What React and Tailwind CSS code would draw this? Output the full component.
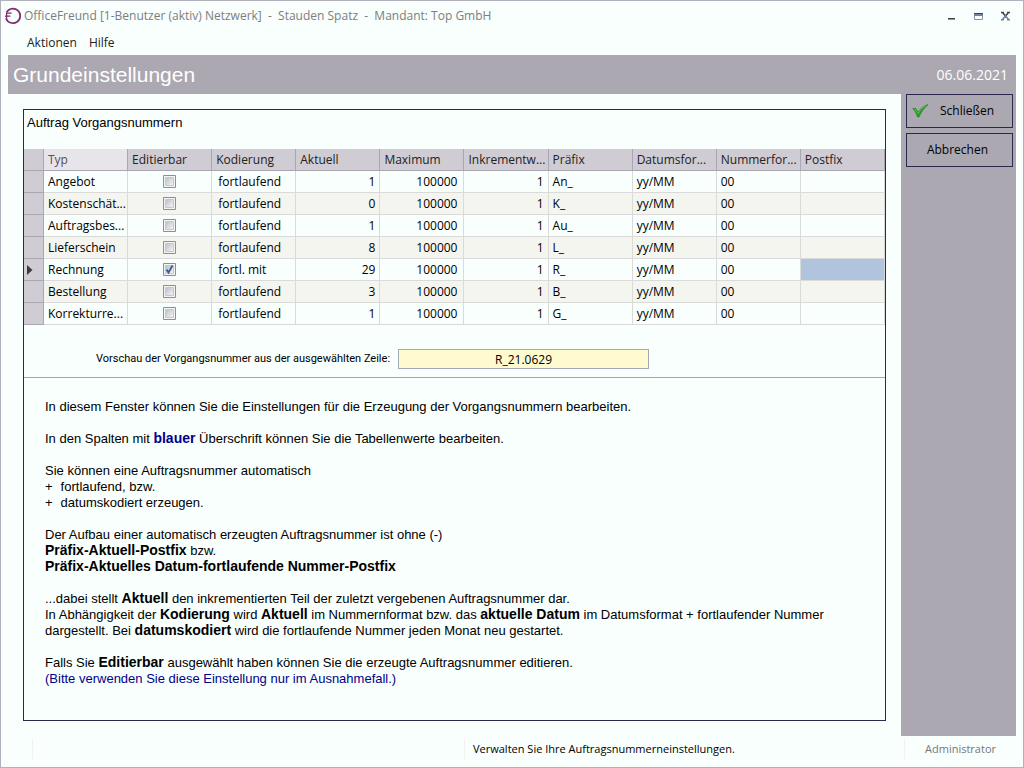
import React, { useState } from 'react';

const initialRows = [
  { typ: 'Angebot', editierbar: false, kodierung: 'fortlaufend', aktuell: 1, prefix: 'An_' },
  { typ: 'Kostenschät...', editierbar: false, kodierung: 'fortlaufend', aktuell: 0, prefix: 'K_' },
  { typ: 'Auftragsbes...', editierbar: false, kodierung: 'fortlaufend', aktuell: 1, prefix: 'Au_' },
  { typ: 'Lieferschein', editierbar: false, kodierung: 'fortlaufend', aktuell: 8, prefix: 'L_' },
  { typ: 'Rechnung', editierbar: true, kodierung: 'fortl. mit', aktuell: 29, prefix: 'R_' },
  { typ: 'Bestellung', editierbar: false, kodierung: 'fortlaufend', aktuell: 3, prefix: 'B_' },
  { typ: 'Korrekturre...', editierbar: false, kodierung: 'fortlaufend', aktuell: 1, prefix: 'G_' },
];

const columns = [
  'Typ', 'Editierbar', 'Kodierung', 'Aktuell', 'Maximum',
  'Inkrementw...', 'Präfix', 'Datumsfor...', 'Nummerfor...', 'Postfix',
];

const SELECTED = 4;

function TitleBar() {
  return (
    <div className="flex h-[30px] items-center pl-[3px] pr-3 text-[#7d7d7d]">
      <svg width="18" height="18" viewBox="0 0 18 18" fill="none" stroke="#82286f" className="mr-0.5">
        <path d="M2.4 5.6A7.3 7.3 0 1 1 2 11.2" strokeWidth="1.7" />
        <path d="M3 6.2H7.6M1 9.2H6.4M2.6 6V11.6" strokeWidth="1.3" />
      </svg>
      <span className="flex-1 whitespace-pre">OfficeFreund [1-Benutzer (aktiv) Netzwerk]  -  Stauden Spatz  -  Mandant: Top GmbH</span>
      <div className="flex gap-4">
        <button type="button" aria-label="Minimieren">
          <svg width="11" height="11" viewBox="0 0 11 11">
            <path d="M2 7h7v1H2z" fill="#3f4450" />
            <path d="M2 8h7v1H2z" fill="#8492ad" />
          </svg>
        </button>
        <button type="button" aria-label="Maximieren">
          <svg width="11" height="11" viewBox="0 0 11 11">
            <path d="M1.5 2.5h8v6h-8z" fill="none" stroke="#8492ad" />
            <path d="M1 2h9v1H1z" fill="#3f4450" />
            <path d="M1 3h9v2H1z" fill="#7482a0" />
          </svg>
        </button>
        <button type="button" aria-label="Fenster schließen">
          <svg width="11" height="11" viewBox="0 0 11 11" fill="none">
            <path d="M2.5 1.5L5.5 5L8.5 1.5M1 1.5h3M7 1.5h3" stroke="#3f4450" strokeWidth="1.6" />
            <path d="M2.5 8.5L5.5 5L8.5 8.5M1 8.8h3M7 8.8h3" stroke="#7182a2" strokeWidth="1.6" />
          </svg>
        </button>
      </div>
    </div>
  );
}

function Tick({ checked, onClick }) {
  return (
    <svg width="13" height="13" viewBox="0 0 13 13" onClick={onClick} className="mx-auto block">
      <defs>
        <linearGradient id="box" x1="0" y1="0" x2="1" y2="1">
          <stop offset="0" stopColor="#b9bfc8" />
          <stop offset="1" stopColor="#f6f6f6" />
        </linearGradient>
      </defs>
      <path d="M.5 .5h12v12H.5z" fill="#f4f4f4" stroke="#8e8f8f" />
      <path d="M2.5 2.5h8v8h-8z" fill="url(#box)" stroke="#c4c8ce" />
      {checked && <path d="M3.5 6.5L5.5 9.5L9.5 2.5" fill="none" stroke="#3a5c99" strokeWidth="1.8" />}
    </svg>
  );
}

function NumberTable({ rows, onToggle }) {
  return (
    <table className="w-full table-fixed border-separate border-spacing-0 text-black">
      <thead>
        <tr className="h-[22px] bg-[#d0ccd3] text-left text-[#222]">
          <th className="w-5 border-b border-r border-[#aaa7b2]" aria-label="Auswahl" />
          {columns.map((col, i) => (
            <th
              key={col}
              className={`whitespace-nowrap border-b border-r border-[#aaa7b2] pl-1 font-normal ${i === 0 ? 'bg-[#e8e5ea] text-[#55505f]' : ''}`}
            >
              {col}
            </th>
          ))}
        </tr>
      </thead>
      <tbody>
        {rows.map((row, i) => (
          <tr key={row.typ} className="h-[22px] even:bg-[#f5f5f0] [&>td]:whitespace-nowrap [&>td]:border-b [&>td]:border-r [&>td]:border-[#dadada] [&>td]:pl-1">
            <th className="border-b border-r border-[#aaa7b2] bg-[#d0ccd3]">
              {i === SELECTED && (
                <svg width="6" height="10" viewBox="0 0 6 10" className="ml-[3px] block">
                  <path d="M0 0L5.5 5L0 10z" fill="#3c3c40" />
                </svg>
              )}
            </th>
            <td>{row.typ}</td>
            <td className="pr-1">
              <input
                type="checkbox"
                aria-label={`${row.typ} editierbar`}
                checked={row.editierbar}
                onChange={() => onToggle(i)}
                className="sr-only"
              />
              <Tick checked={row.editierbar} onClick={() => onToggle(i)} />
            </td>
            <td><span className="pl-0.5">{row.kodierung}</span></td>
            <td className="pr-1 text-right">{row.aktuell}</td>
            <td className="pr-1.5 text-right">100000</td>
            <td className="pr-1 text-right">1</td>
            <td>{row.prefix}</td>
            <td>yy/MM</td>
            <td>00</td>
            <td className={i === SELECTED ? 'bg-[#b0c4de]' : ''} />
          </tr>
        ))}
      </tbody>
    </table>
  );
}

function HelpText() {
  return (
    <div className="space-y-4 px-[21px] pt-[21px] font-['Liberation_Sans',Arial,sans-serif] text-[13px] leading-4 text-black [&_b]:text-sm [&_b]:leading-none">
      <p>In diesem Fenster können Sie die Einstellungen für die Erzeugung der Vorgangsnummern bearbeiten.</p>
      <p>In den Spalten mit <b className="text-[#00008b]">blauer</b> Überschrift können Sie die Tabellenwerte bearbeiten.</p>
      <div>
        <p>Sie können eine Auftragsnummer automatisch</p>
        <ul>
          <li className="flex gap-2"><span>+</span>fortlaufend, bzw.</li>
          <li className="flex gap-2"><span>+</span>datumskodiert erzeugen.</li>
        </ul>
      </div>
      <p>
        Der Aufbau einer automatisch erzeugten Auftragsnummer ist ohne (-)<br />
        <b>Präfix-Aktuell-Postfix</b> bzw.<br />
        <b>Präfix-Aktuelles Datum-fortlaufende Nummer-Postfix</b>
      </p>
      <p>
        ...dabei stellt <b>Aktuell</b> den inkrementierten Teil der zuletzt vergebenen Auftragsnummer dar.<br />
        In Abhängigkeit der <b>Kodierung</b> wird <b>Aktuell</b> im Nummernformat bzw. das <b>aktuelle Datum</b> im Datumsformat + fortlaufender Nummer<br />
        dargestellt. Bei <b>datumskodiert</b> wird die fortlaufende Nummer jeden Monat neu gestartet.
      </p>
      <p>
        Falls Sie <b>Editierbar</b> ausgewählt haben können Sie die erzeugte Auftragsnummer editieren.<br />
        <span className="text-[#00008b]">(Bitte verwenden Sie diese Einstellung nur im Ausnahmefall.)</span>
      </p>
    </div>
  );
}

export default function App() {
  const [rows, setRows] = useState(initialRows);

  const toggle = (index) => {
    setRows(rows.map((r, i) => (i === index ? { ...r, editierbar: !r.editierbar } : r)));
  };

  return (
    <div className="flex min-h-screen flex-col border border-[#b0b0ba] bg-[#f8fffd] px-[7px] font-['Open_Sans','Segoe_UI',sans-serif] text-xs">
      <div className="-mx-[7px]">
        <TitleBar />
      </div>
      <nav className="flex h-6 items-center gap-3 pl-[19px] text-[#222]">
        <button type="button">Aktionen</button>
        <button type="button">Hilfe</button>
      </nav>

      <header className="flex h-[39px] items-center justify-between bg-[#aba8b2] pl-[5px] pr-2 text-white">
        <h1 className="font-['Liberation_Sans',Arial,sans-serif] text-[21px]">Grundeinstellungen</h1>
        <span className="text-sm">06.06.2021</span>
      </header>

      <div className="flex flex-1">
        <main className="flex flex-1 flex-col px-[15px] py-[15px]">
          <section className="flex flex-1 flex-col border border-[#2b2850]">
            <h2 className="h-[39px] pl-[3px] pt-[5px] font-['Liberation_Sans',Arial,sans-serif] text-[13px] leading-4 text-black">
              Auftrag Vorgangsnummern
            </h2>
            <NumberTable rows={rows} onToggle={toggle} />
            <div className="flex items-center border-b border-[#a3a8ae] pb-2 pl-[72px] pt-6 text-black">
              <label htmlFor="preview" className="font-[Roboto,sans-serif] text-[11px]">
                Vorschau der Vorgangsnummer aus der ausgewählten Zeile:
              </label>
              <input
                id="preview"
                readOnly
                value="R_21.0629"
                className="ml-2 h-5 w-[251px] border border-[#a3a8b4] bg-[#fffbcf] text-center"
              />
            </div>
            <HelpText />
          </section>
        </main>

        <aside className="flex w-[115px] flex-col gap-[5px] bg-[#aba8b2] pl-[5px] pr-[3px] text-black">
          <button type="button" className="flex h-[34px] items-center border border-[#2b2850] pl-[5px] pr-[18px]">
            <svg width="17" height="14" viewBox="0 0 17 14">
              <path d="M.8 4.5L3.5 4.2L6.2 8C9 4.2 12 1.6 16 .6C12 4 9.5 8 7 13H5.5C4.5 10 3 7 .8 4.5z" fill="#27a022" stroke="#1f7f1f" strokeWidth=".6" />
              <path d="M2.5 5L6 9.5C8.5 5.5 11 3.2 13.5 2" fill="none" stroke="#62cc50" strokeWidth=".8" />
            </svg>
            <span className="flex-1 text-right">Schließen</span>
          </button>
          <button type="button" className="h-[34px] border border-[#2b2850] pr-1">Abbrechen</button>
        </aside>
      </div>

      <footer className="mb-1.5 flex h-[25px] items-center pl-6 text-[11px] leading-5 text-black">
        <span className="h-5 flex-1 border-l border-[#f3f0f2]" />
        <span className="flex-1 border-l border-[#f3f0f2] pl-2">
          <span className="whitespace-nowrap">Verwalten Sie Ihre Auftragsnummerneinstellungen.</span>
        </span>
        <span className="w-28 border-l border-[#f3f0f2] pr-5 text-right text-[#777]">Administrator</span>
      </footer>
    </div>
  );
}
